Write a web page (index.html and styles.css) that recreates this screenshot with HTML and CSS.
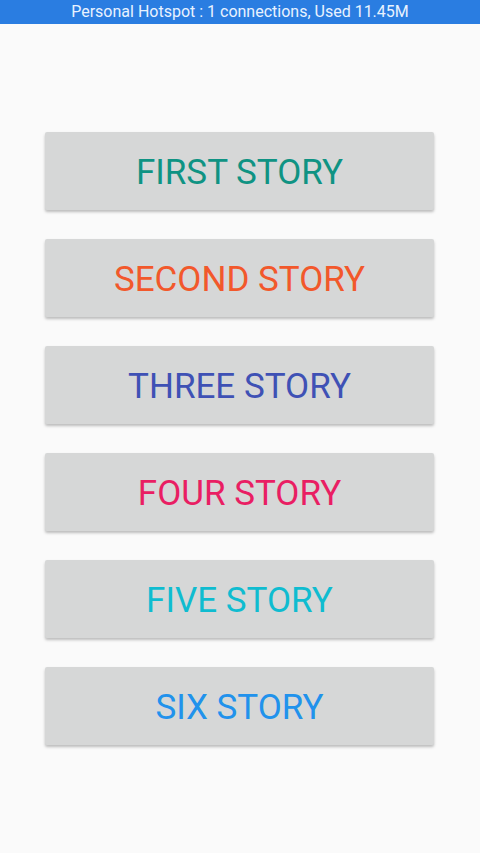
FILE: index.html
```html
<!DOCTYPE html>
<html lang="en">
<head>
    <meta charset="UTF-8">
    <meta name="viewport" content="width=device-width, initial-scale=1.0">
    <title>Stories</title>
    <link rel="stylesheet" href="styles.css">
</head>
<body>
    <div class="status-bar">Personal Hotspot : 1 connections, Used 11.45M</div>
    <div class="container">
        <button class="story teal">FIRST STORY</button>
        <button class="story orange">SECOND STORY</button>
        <button class="story indigo">THREE STORY</button>
        <button class="story pink">FOUR STORY</button>
        <button class="story cyan">FIVE STORY</button>
        <button class="story blue">SIX STORY</button>
    </div>
</body>
</html>
```
FILE: styles.css
```css
body, html {
    margin: 0;
    height: 100%;
    font-family: Roboto, "Liberation Sans", sans-serif;
    background-color: #fafafa;
}
.status-bar {
    height: 24px;
    line-height: 24px;
    background: #2a7de1;
    color: #e8f2ff;
    font-size: 16px;
    text-align: center;
}
.container {
    display: flex;
    flex-direction: column;
    gap: 29px;
    padding: 108px 46px 0 45px;
}
.story {
    height: 78px;
    border: none;
    border-radius: 2px;
    background: #d6d7d7;
    box-shadow: 0 2px 3px rgba(0,0,0,0.25);
    font-family: Roboto, "Liberation Sans", sans-serif;
    font-size: 35px;
    padding: 2px 0 0 0;
    cursor: pointer;
}
.teal { color: #0f9383; }
.orange { color: #f2582b; }
.indigo { color: #3f51b5; }
.pink { color: #e91e63; }
.cyan { color: #0fbcd0; }
.blue { color: #2192ec; }
```
